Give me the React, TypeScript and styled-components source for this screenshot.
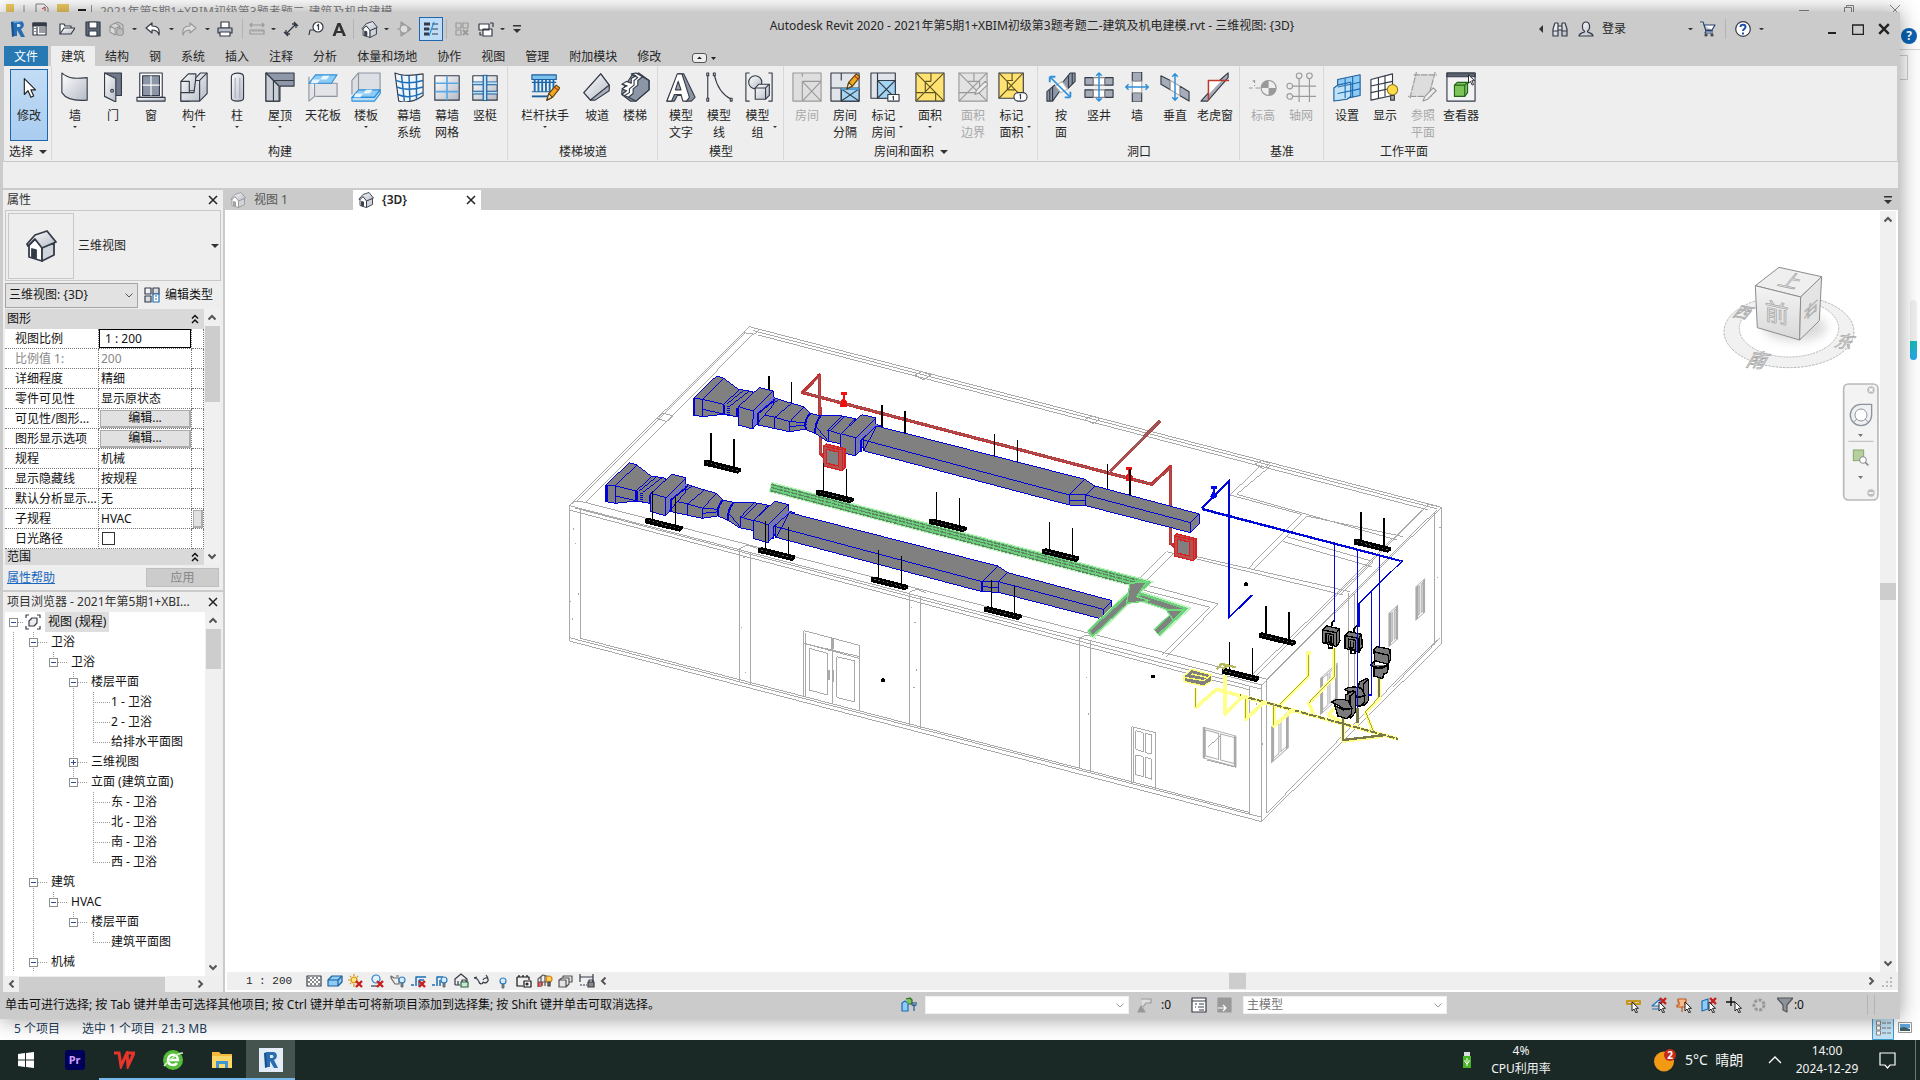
import React from "react";
import styled, { createGlobalStyle } from "styled-components";

const Global = createGlobalStyle`
  * { box-sizing: border-box; }
  html, body { margin: 0; height: 100%; }
  body { font: 12px/16px "Noto Sans", "Noto Sans CJK SC", sans-serif; color: #262626; background: #fff; overflow: hidden; }
  button, input, select { font: inherit; color: inherit; margin: 0; padding: 0; border: 0; background: none; border-radius: 0; }
  svg { display: block; flex: none; }
  ul { list-style: none; margin: 0; padding: 0; }
`;

/* ---------- shell ---------- */
const Desktop = styled.div`
  position: relative; display: flex; flex-direction: column; height: 100vh; min-height: 720px; overflow: hidden;
`;
const Explorer = styled.div`
  position: absolute; inset: 0 0 40px 0; display: flex; flex-direction: column; justify-content: space-between; background: #fff; overflow: hidden;
`;
const ExplorerTop = styled.div`
  display: flex; align-items: flex-start; height: 80px; color: #8c8c8c; padding-left: 6px;
`;
const ExplorerTitle = styled.span`padding: 4px 0 0 8px; flex: 1; white-space: nowrap;`;
const ExplorerBottom = styled.div`
  display: flex; align-items: center; height: 22px; padding: 0 8px 0 14px; gap: 22px; color: #24405e;
`;
const Grow = styled.span`flex: 1;`;
const Gap = styled.span<{ $w: number }>`width: ${p => p.$w}px; flex: none;`;
const Widget = styled.div`
  position: absolute; right: 3px; top: 300px; width: 7px; height: 60px; border-radius: 4px;
  background: linear-gradient(#f1f1f1 0 68%, #19bcb4 68%, #2aa8f0);
`;
const HelpBadge = styled.div`
  position: absolute; right: 3px; top: 28px; width: 16px; height: 16px; border-radius: 50%;
  background: #0b63b5; color: #fff; text-align: center; font-weight: 700;
`;
const SearchEdge = styled.div`
  position: absolute; right: 0; top: 49px; width: 40px; height: 29px; border-top: 1px solid #d8d8d8; padding: 5px 12px 0 0;
  &::after { content: ""; display: block; height: 23px; border: 1px solid #cfcfcf; }
`;
const AppWindow = styled.main`
  position: relative; flex: 1; min-height: 0; margin: 12px 20px 21px 0; display: flex; flex-direction: column;
  background: #cbcbcb; box-shadow: 0 0 20px rgba(0,0,0,.4);
`;

/* ---------- title bar ---------- */
const TitleBar = styled.header`
  display: grid; grid-template-columns: auto 1fr auto; align-items: center; height: 34px; padding: 0 4px 0 8px;
`;
const Tools = styled.div`display: flex; align-items: center;`;
const WindowTools = styled(Tools)`margin-left: 55px;`;
const ToolButton = styled.button<{ $w?: number; $on?: boolean }>`
  display: flex; align-items: center; justify-content: center; width: ${p => p.$w || 24}px; height: 24px;
  background: ${p => (p.$on ? "#bcdcf7" : "none")}; border: ${p => (p.$on ? "1px solid #1f66ad" : "0")};
`;
const Divider = styled.span`width: 1px; height: 20px; background: #b4b4b4; margin: 0 3px;`;
const Title = styled.h1`margin: 0; padding-bottom: 6px; font-size: 12px; line-height: 16px; font-weight: 400; white-space: nowrap; text-align: center;`;
const Login = styled.button`width: 88px; text-align: left; padding-left: 4px;`;

/* ---------- ribbon ---------- */
const TabRow = styled.nav`display: flex; height: 20px; padding-left: 4px; white-space: nowrap;`;
const Tab = styled.button<{ $kind?: string }>`
  height: 20px; padding: 2px 10px 0;
  ${p => p.$kind === "file" && "background:#2679b3; color:#fff; margin-right:3px;"}
  ${p => p.$kind === "on" && "background:#eee;"}
`;
const Ribbon = styled.section`
  display: flex; height: 96px; margin: 0 3px 0 4px; background: #eee; border-bottom: 1px solid #c8c8c8;
`;
const Panel = styled.div`
  display: flex; flex-direction: column; justify-content: space-between; padding: 3px 3px 0 4px; margin: 0 0 1px;
  border-right: 1px solid #d8d8d8; &:last-child { border-right: 0; }
`;
const PanelRow = styled.div`display: flex; height: 72px;`;
const PanelName = styled.div`
  display: flex; align-items: center; justify-content: center; gap: 6px; height: 16px; white-space: nowrap;
`;
const BigButton = styled.button<{ $w: number; $off?: boolean; $on?: boolean }>`
  display: flex; flex-direction: column; align-items: center; width: ${p => p.$w}px; height: 72px; padding-top: 3px;
  line-height: 17px; white-space: nowrap; color: ${p => (p.$off ? "#a8a8a8" : "#262626")};
  ${p => p.$on && "background: linear-gradient(#c3dcf5,#a9cdf0); border: 1px solid #1f66ad; margin-left: 2px; padding-top: 2px;"}
`;
const Label = styled.span`display: flex; align-items: center; margin-top: 5px; text-align: center;`;
const Options = styled.div`height: 28px; margin: 0 2px 0 3px; background: #eee; border-bottom: 2px solid #cbcbcb;`;

/* ---------- workspace ---------- */
const Work = styled.div`flex: 1; min-height: 0; display: flex; gap: 2px; margin: 0 2px 0 3px;`;
const Side = styled.aside`display: flex; flex-direction: column; width: 220px; flex: none; gap: 2px;`;
const Palette = styled.section<{ $grow?: boolean }>`
  display: flex; flex-direction: column; background: #eee; padding: 0 2px; min-height: 0; ${p => p.$grow && "flex: 1;"}
`;
const PaletteHead = styled.div`
  display: flex; align-items: center; justify-content: space-between; height: 20px; padding: 0 1px 0 2px; flex: none; white-space: nowrap; color: #333;
`;
const HeadText = styled.h2`margin: 0; font-size: 12px; line-height: 16px; font-weight: 400;`;
const IconButton = styled.button`display: flex; align-items: center; justify-content: center; width: 14px; height: 16px; flex: none;`;
const TypeBox = styled.button`
  display: flex; align-items: center; gap: 4px; height: 71px; padding: 2px 1px 2px 2px; border: 1px solid #c8c8c8; text-align: left; flex: none;
`;
const Thumb = styled.span`display: flex; align-items: center; justify-content: center; width: 66px; height: 66px; border: 1px solid #c8c8c8;`;
const TypeRow = styled.div`display: flex; align-items: center; gap: 6px; height: 28px; flex: none;`;
const SelectBox = styled.label<{ $w: number; $dim?: boolean }>`
  position: relative; display: flex; align-items: center; width: ${p => p.$w}px; height: ${p => (p.$dim ? 18 : 25)}px;
  background: ${p => (p.$dim ? "#fff" : "#e2e2e2")}; border: 1px solid ${p => (p.$dim ? "#f0f0f0" : "#a5a5a5")};
  color: ${p => (p.$dim ? "#777" : "#1a1a1a")};
  select { appearance: none; width: 100%; height: 100%; padding: 0 20px 0 3px; outline: 0; }
  svg { position: absolute; right: 4px; pointer-events: none; }
`;
const TextButton = styled.button`display: flex; align-items: center; gap: 5px; white-space: nowrap; color: #111;`;
const PropBody = styled.div`display: flex; height: 256px; overflow: hidden; flex: none;`;
const PropTable = styled.table`
  width: 199px; height: 260px; border-collapse: separate; border-spacing: 0; table-layout: fixed; background: #fff; color: #111; align-self: flex-start;
  th, td { height: 20px; padding: 0 0 0 2px; font-weight: 400; text-align: left; line-height: 16px; white-space: nowrap;
    border: 0 dotted #777; border-width: 0 1px 1px 0; }
  tbody th { padding-left: 10px; }
  tr.group th { background: #d9d9d9; border: 0; padding: 0 5px 0 2px; }
  tr.group:last-child th { padding-bottom: 4px; }
  tr.dim th, tr.dim td { color: #888; }
`;
const GroupHead = styled.span`display: flex; align-items: center; justify-content: space-between;`;
const CellInput = styled.input`display: block; width: 92px; height: 19px; margin-left: -2px; padding: 0 5px; border: 1px solid #000; outline: 0; background: #fff;`;
const CellButton = styled.button`
  display: block; width: 91px; height: 18px; margin-left: -1px; background: #e1e1e1; border: 1px solid #adadad; border-width: 1px 2px 2px 1px; line-height: 14px;
`;
const MiniButton = styled(CellButton)`width: 10px;`;
const CellCheck = styled.input`
  display: block; appearance: none; width: 13px; height: 13px; margin: 0 1px; border: 1px solid #333; background: #fff;
`;
const ScrollV = styled.div`
  display: flex; flex-direction: column; align-items: center; width: 16px; flex: none; background: #f0f0f0; padding: 1px 0;
`;
const ScrollH = styled.div`
  display: flex; align-items: center; height: 16px; flex: 1; background: #efefef; min-width: 0;
`;
const ScrollRow = styled.div`display: flex; height: 16px; flex: none; padding-right: 14px;`;
const Knob = styled.span<{ $w: number; $h: number }>`width: ${p => p.$w}px; height: ${p => p.$h}px; background: #cdcdcd; flex: none;`;
const Foot = styled.div`display: flex; align-items: center; justify-content: space-between; height: 25px; padding: 0 2px; flex: none;`;
const HelpLink = styled.a`color: #1667c0; text-decoration: underline;`;
const Apply = styled.button`width: 73px; height: 19px; background: #ccc; border: 1px solid #bfbfbf; color: #868686;`;

/* ---------- browser tree ---------- */
const TreeWrap = styled.div`display: flex; flex: 1; min-height: 0;`;
const Tree = styled.ul`flex: 1; background: #fff; overflow: hidden; color: #111; min-width: 0;`;
const TreeRow = styled.li`display: flex; align-items: center; height: 20px; white-space: nowrap;`;
const Guide = styled.span<{ $line: "full" | "half" | "none"; $w?: number }>`
  display: flex; align-items: center; width: ${p => p.$w || 20}px; height: 20px; padding-left: 4px; flex: none;
  background: repeating-linear-gradient(#999 0 1px, transparent 1px 2px) 8px 0 / 1px ${p => (p.$line === "full" ? "20px" : p.$line === "half" ? "10px" : "0px")} no-repeat;
`;
const Expander = styled.button`display: flex; width: 9px; height: 9px; flex: none; background: #fff;`;
const Dots = styled.span<{ $w: number; $leaf?: boolean }>`
  width: ${p => p.$w}px; height: 1px; margin-left: ${p => (p.$leaf ? 4 : 0)}px; background: repeating-linear-gradient(90deg, #999 0 1px, transparent 1px 2px);
`;
const RootName = styled.span`height: 20px; line-height: 20px; padding: 0 3px; margin-left: 4px; background: #dedede;`;

/* ---------- view area ---------- */
const View = styled.section`flex: 1; min-width: 0; display: flex; flex-direction: column; background: #fff;`;
const ViewTabs = styled.div`display: flex; align-items: center; height: 20px; background: #cbcbcb; flex: none;`;
const ViewTab = styled.button<{ $on?: boolean }>`
  display: flex; align-items: center; gap: 8px; width: 128px; height: 20px; padding: 0 5px; text-align: left;
  background: ${p => (p.$on ? "#fff" : "none")}; font-weight: ${p => (p.$on ? 600 : 400)}; color: ${p => (p.$on ? "#262626" : "#555")};
`;
const Stage = styled.div`flex: 1; min-height: 0; display: flex; padding: 1px 2px 0 0;`;
const Drawing = styled.svg`flex: 1; min-width: 0; height: 100%;`;
const ViewBar = styled.div`display: flex; align-items: center; height: 18px; margin: 0 0 2px 2px; background: #efefef; flex: none;`;
const ScaleText = styled.button`width: 76px; padding-left: 8px; text-align: center; font: 11px/16px "Liberation Mono", monospace; white-space: pre;`;
const ViewIcon = styled.button`display: flex; align-items: center; justify-content: center; width: 21px; height: 18px; flex: none;`;

/* ---------- status ---------- */
const Status = styled.footer`display: flex; align-items: center; height: 27px; padding: 0 22px 2px 5px; color: #111; flex: none; white-space: nowrap;`;
const StatusHint = styled.span`flex: 0 0 896px;`;
const StatusGroup = styled.div<{ $gap?: number }>`display: flex; align-items: center; gap: ${p => p.$gap || 8}px;`;

/* ---------- taskbar ---------- */
const Taskbar = styled.nav`display: flex; align-items: stretch; height: 40px; padding-left: 1px; background: #1a2926; color: #f4f4f4; flex: none; position: relative;`;
const Task = styled.button<{ $run?: boolean; $on?: boolean }>`
  display: flex; align-items: center; justify-content: center; width: 49px; background: ${p => (p.$on ? "#45544f" : "none")};
  border-bottom: 2px solid ${p => (p.$run || p.$on ? "#76b9ed" : "transparent")}; padding-top: 2px;
`;
const Pr = styled.span`width: 20px; height: 20px; border-radius: 3px; background: #00005b; color: #d0a0ff; font: 700 11px/20px "Noto Sans", sans-serif;`;
const Two = styled.div<{ $w: number }>`
  display: flex; flex-direction: column; justify-content: center; width: ${p => p.$w}px; text-align: center; line-height: 18px;
`;
const Weather = styled.button`display: flex; align-items: center; gap: 9px; width: 112px; color: #f4f4f4; font-size: 14px; white-space: pre;`;
const Tray = styled.button<{ $w: number }>`display: flex; align-items: center; justify-content: center; width: ${p => p.$w}px;`;
const Edge = styled.span`width: 5px; margin-left: 5px; border-left: 1px solid #6d7774;`;

/* ---------- small glyphs ---------- */
const D = "#343b47";
const Ico = ({ s = 16, vb, children, off }: { s?: number; vb?: number; children: React.ReactNode; off?: boolean }) => (
  <svg width={s} height={s} viewBox={`0 0 ${vb || s} ${vb || s}`} fill="none" stroke={off ? "#999" : D} strokeWidth="1.2" strokeLinejoin="round" aria-hidden="true">{children}</svg>
);
const Down = ({ s = 6 }: { s?: number }) => (
  <svg width={s} height={s / 2} viewBox="0 0 6 3" aria-hidden="true"><path d="M0 0h6L3 3z" fill="#333" /></svg>
);
const Cross = ({ s = 10, w = 2 }: { s?: number; w?: number }) => (
  <svg width={s} height={s} viewBox="0 0 10 10" aria-hidden="true"><path d="M1 1l8 8M9 1L1 9" stroke="#222" strokeWidth={w} /></svg>
);
const Chevron = ({ r = 0, c = "#555", w = 2, s = 8 }: { r?: number; c?: string; w?: number; s?: number }) => (
  <svg width={s} height={s} viewBox="0 0 8 8" aria-hidden="true"><path transform={`rotate(${r} 4 4)`} d="M0.5 2.5L4 6l3.5-3.5" stroke={c} strokeWidth={w} fill="none" /></svg>
);
const House = ({ s = 16, off }: { s?: number; off?: boolean }) => (
  <Ico s={s} vb={32} off={off}>
    <g strokeWidth="1.8"><path d="M4 15v12l13 4V17L10 9z" fill="#fff" /><path d="M17 17v14l12-6V13z" fill="#cfd3da" />
      <path d="M2 14l8-9 12-4 9 11-14 6-7-9-7 7z" fill="url(#metal)" /><path d="M7 19v8l4 1v-8z" fill={off ? "#aaa" : D} /></g>
  </Ico>
);
const RLogo = ({ s = 18 }: { s?: number }) => (
  <svg width={s} height={s} viewBox="0 0 18 18" aria-hidden="true">
    <path d="M2 2l4-1v15l-3 1z" fill="#17508e" /><path d="M4 1h7c5 0 5 7 1 8l4 8h-4L8 10v6H5z" fill="#2a6cb0" /><path d="M8 4v3h2c2 0 2-3 0-3z" fill="#cfe2f2" />
    <path d="M4 1h7l2 1-8 1z" fill="#6db0e6" />
  </svg>
);
const RedX = ({ x = 8, y = 8 }: { x?: number; y?: number }) => <path d={`M${x} ${y}l6 6M${x + 6} ${y}l-6 6`} stroke="#c81e1e" strokeWidth="2.4" />;
const Arrow = () => <path d="M6 5v9l2-2 2 4 1.500-.7-2-4h3z" fill="#fff" stroke="#222" strokeWidth="1" />;

/* Ribbon drawings, on a 32 unit grid. */
const B = "#2f8fd8";
const pencil = <g><path d="M18 30l2-7 8-9 4 3-8 10z" fill="#f3a91e" stroke="#5b4210" /><path d="M18 30l2-7 4 4z" fill="#f7e3c0" stroke="#5b4210" /><path d="M26 16l4 3.500" stroke="#b33" /></g>;
const R: Record<string, React.ReactNode> = {
  cursor: <path d="M11 7v17l4-4 3 7 3-1.500-3-6.500h5z" fill="#fff" stroke="#222" />,
  wall: <path d="M2 1c7 7 17 6 27 5v24C17 31 7 30 2 22z" fill="url(#metal)" />,
  door: <g><path d="M7 1h18v24h-18z" fill="#707989" /><path d="M7 1l12 6v25L7 26z" fill="url(#metal)" /><circle cx="15" cy="20" r="1.500" /></g>,
  window: <g><path d="M4 1h24v26H4z" fill="#fff" /><path d="M7 4h18v21H7z" fill="#8d96a6" /><path d="M16 4v21M7 14h18" stroke="#fff" /><path d="M1 27h30v4H1z" fill="url(#metal)" /></g>,
  part: <g><path d="M2 10l8-8h8v18h-7v11H2z" fill="url(#metal)" /><path d="M18 6l5-5h7v22l-8 8H2V22h14z" fill="url(#metal)" /><path d="M22 31V9h-4M22 9l8-8M2 10h9v10" /></g>,
  column: <g><path d="M10 5c0-5 13-5 13 0v23c0 4-13 4-13 0z" fill="url(#metal)" /><path d="M14 6v22M19 6v22" stroke="#aab" /></g>,
  roof: <g><path d="M1 1h30v14H16v16H1z" fill="#8f98a8" /><path d="M1 1l14 14v16H1z" fill="#c9ced6" /><path d="M1 1l8 8h22M9 9v22M1 1l14 14" /></g>,
  ceiling: <g><path d="M1 5v26l6-5V12h24v14H8" fill="#e2e4e8" stroke="#8d949f" /><path d="M1 12l7-9h23l-6 9z" fill="#8ecbf5" stroke={B} /><path d="M5 8h8l-3 4H3zM16 4h7l-3 4h-7z" fill="#e8f5ff" stroke="none" /></g>,
  floor: <g><path d="M1 24V9l7-8h23v22" fill="#dcdfe4" stroke="#8d949f" /><path d="M8 1v19" stroke="#8d949f" /><path d="M1 27l7-8h23l-6 8z" fill="#8ecbf5" stroke={B} /><path d="M1 27v4h24l6-8v-4l-6 8z" fill="#b9dff8" stroke={B} /><path d="M5 23h8l-3 4H3zM16 19h7l-3 4h-7z" fill="#e8f5ff" stroke="none" /></g>,
  curtain: <g><path d="M1 1c9 4 19 3 30 1v23c-9 7-20 8-26 6z" fill="#eef6fc" /><path d="M2 9c9 4 19 3 29 0M3 16c9 4 18 3 28 0M4 24c9 4 17 3 27-2M8 3l3 28M16 4l1 27M24 3v27" stroke="#1c6db5" strokeWidth="1.600" /></g>,
  grid: <g><path d="M3 4h26v26H3z" fill="url(#metal)" /><path d="M16 4v26M3 12h26M3 21h26" stroke="#5aa9e6" strokeWidth="1.800" /></g>,
  mullion: <g><path d="M3 4h26v26H3z" fill="url(#metal)" /><path d="M3 12h26M3 22h26" stroke="#1d5c96" strokeWidth="4" /><path d="M3 12h26M3 22h26" stroke="#b9e0fa" strokeWidth="2" /><path d="M16 3v28" stroke="#1d5c96" strokeWidth="5" /><path d="M16 4v26" stroke="#b9e0fa" strokeWidth="2.500" /></g>,
  rail: <g><path d="M2 3h26v5H2zM2 11h26M2 21h26" fill="#7cc0ee" stroke="#1c5f9d" /><path d="M5 8v13M9 8v13M13 8v13M17 8v13M21 8v13M25 8v13" stroke="#1c6db5" strokeWidth="2" /><path d="M2 26h18" stroke="#1c5f9d" strokeWidth="2" />{pencil}</g>,
  ramp: <g><path d="M2 22L20 2l9 12v3L9 30z" fill="#fff" /><path d="M2 22L20 2l9 12L9 30z" fill="url(#metal)" /><path d="M9 30L29 14v6L14 30z" fill="#a9b0bc" /></g>,
  stair: <g><path d="M13 3L20 1 31 9V19L17 31H11L2 24V20z" fill="#8d96a6" /><path d="M2 13L7 10 12 12V7L17 4 12 2 17 1 24 5 19 9V14L14 18V23L9 27 2 24 7 20 2 18 7 15z" fill="#fff" /><path d="M13 3l6 3-4 3v5l-5 4v4l-5 3M2 13l6 2" /><path d="M24 5l7 4v10L17 31 9 27" /></g>,
  letterA: <g><path d="M13 2h6l12 25-4 4h-6l-2-6h-7l-3 6H1z" fill="#8d95a3" /><path d="M12 2h5l8 25-3 4h-4l-2-7H9l-3 7H1z" fill="#fff" /><path d="M13 10l-3 9h6z" fill="#9aa2b0" /></g>,
  mline: <g><path d="M4 3v26M11 3c3 14 10 22 18 26" /><path d="M3 1h2v3H3zM3 28h2v3H3zM10 1h2v3h-2zM28 28h2v3h-2z" fill="#fff" /></g>,
  group: <g><path d="M6 1H2v30h4M26 1h4v30h-4" /><circle cx="12" cy="11" r="7" fill="url(#metal)" /><path d="M12 17l4-4h11v12l-4 4H12z" fill="url(#metal)" /><path d="M12 17h11v12M23 17l4-4" /></g>,
  room: <g><path d="M1 1h30v30H1z" fill="#dedede" /><path d="M11 10v20M11 10h20M11 10l20 21M31 10L11 31M11 1v4" /></g>,
  roomSep: <g><path d="M1 1h30v30H1z" fill="#e1e5ea" /><path d="M12 18h19v13H12z" fill="#a3d4f1" /><path d="M12 1v8M12 17v14M12 31l19-13M12 18l19 13M1 17h30" /><path d="M12 18h19" stroke="#4aa3e0" strokeWidth="2" /><g transform="translate(0,-12)">{pencil}</g></g>,
  roomTag: <g><path d="M1 1h26v27H1z" fill="#e1e5ea" /><path d="M8 9h19v19H8z" fill="#a3d4f1" /><path d="M8 1v27M8 9h19M8 9l19 19M27 9L8 28" /><path d="M19 24h12v7H19z" fill="#fff" /><path d="M24 27l1-1v4" /></g>,
  area: <g><path d="M1 1h30v30H1z" fill="#ffe270" /><path d="M1 1l30 30M31 1L1 31M11 10v12h11M11 10h6M17 1v9M1 22h8M22 22v9" stroke="#5f5325" /></g>,
  areaOff: <g><path d="M1 1h30v30H1z" fill="#e2e2e2" /><path d="M1 1l30 30M31 1L1 31M11 10h12v12H1M17 1v9" /><path d="M18 24l2-5 9-9 3 3-9 9z" fill="#eee" /></g>,
  areaTag: <g><path d="M1 1h26v27H1z" fill="#ffe270" /><path d="M1 1l26 27M27 1L1 28M10 9v10h9M15 1v8M10 9h6" stroke="#5f5325" /><rect x="17" y="22" width="14" height="9" rx="4.500" fill="#fff" /><path d="M23 25l1-1v5" /></g>,
  byFace: <g><path d="M1 31V21l8-7 6 6-8 11zM17 12L26 1h5v9l-8 8z" fill="#8d96a6" /><path d="M4 19v12M7 16v15M24 4v13M28 1v12" /><path d="M10 15l7-5 6 8-7 4z" fill="#fff" stroke="#bbb" /><path d="M5 6l20 20" stroke={B} strokeWidth="1.600" /><path d="M4 5h6M4 5v6M26 27h-6M26 27v-6" stroke={B} strokeWidth="2" /></g>,
  shaft: <g><path d="M1 6h9v8H1zM22 6h9v8h-9zM1 19h9v8H1zM22 19h9v8h-9z" fill="#a6adb9" /><path d="M10 6h12v8H10zM10 19h12v8H10z" fill="#fff" stroke="#888" /><path d="M16 1v30M13 4l3-3 3 3M13 28l3 3 3-3" stroke={B} strokeWidth="1.600" /></g>,
  openWall: <g><path d="M11 0h10v10H11zM11 22h10v10H11z" fill="#a6adb9" /><path d="M11 10h10v12H11z" fill="#fff" stroke="#aaa" /><path d="M4 16h24M7 13l-3 3 3 3M25 13l3 3-3 3" stroke={B} strokeWidth="1.600" /></g>,
  vert: <g><path d="M1 4l10 5v10L1 13zM21 15l10 6v10l-10-6z" fill="#a6adb9" /><path d="M11 9l10 6v10l-10-6z" fill="#fff" stroke="#aaa" /><path d="M16 2v28M13 5l3-3 3 3M13 27l3 3 3-3" stroke={B} strokeWidth="1.600" /></g>,
  dormer: <g><path d="M1 31L22 8 30 1v5L8 31z" fill="#a6adb9" /><path d="M9 9l14 0-14 15z" fill="#fff" stroke="none" /><path d="M9 30V9h22" stroke="#c0392b" strokeWidth="1.600" /></g>,
  level: <g><path d="M1 17h4M8 17h22M5 10l2-1v6" strokeDasharray="5 2" /><circle cx="22" cy="17" r="8" fill="#eee" /><path d="M22 9v8h-8a8 8 0 0 1 8-8zM22 25v-8h8a8 8 0 0 1-8 8z" fill="#999" stroke="none" /></g>,
  axes: <g><circle cx="4" cy="15" r="3" /><circle cx="4" cy="26" r="3" /><circle cx="14" cy="4" r="3" /><circle cx="25" cy="4" r="3" /><path d="M7 15h25M7 26h25M14 7v25M25 7v25" /></g>,
  plane: <g><path d="M6 8l24-5v22L6 30z" fill="#8ecbf5" stroke="#1c5f9d" /><path d="M2 17l4-3 14-3v15l-4 3-14 2z" fill="#bfe2f9" stroke="#1c5f9d" /><path d="M6 16l24-5M6 23l24-5M14 7v21M22 5v22" stroke="#1c6db5" /></g>,
  show: <g><path d="M1 8l23-6v23L1 30z" fill="#fff" /><path d="M1 15l23-5M1 22l23-5M9 6v22M16 4v22" /><circle cx="24" cy="19" r="5.500" fill="#ffdc4a" stroke="#9a7a14" /><path d="M22 25h4v5h-4z" fill="#aaa" /></g>,
  refPlane: <g><path d="M8 3h20l-5 22H3z" fill="#ddd" stroke="none" /><path d="M6 3h25M29 0l-7 26M25 26H0M2 28L9 0" strokeDasharray="7 1" /><path d="M16 31l2-5 9-9 3 3-9 9z" fill="#eee" /></g>,
  viewer: <g><path d="M1 1h30v30H1z" fill="#f3f3f6" /><path d="M1 1h30v4H1z" fill="#5b6270" /><path d="M9 14l3-3h11v11l-3 4H9z" fill="#7cc35c" stroke="#24641a" /><path d="M9 14h11v12M20 14l3-3" stroke="#24641a" /><g transform="translate(18 -2)"><Arrow /></g></g>,
};

type Btn = { i: string; t: string; u?: string; w?: number; off?: boolean; dd?: boolean };
const panels: { name: string; dd?: boolean; b: Btn[] }[] = [
  { name: "构建", b: [
    { i: "wall", t: "墙", dd: true }, { i: "door", t: "门" }, { i: "window", t: "窗" }, { i: "part", t: "构件", w: 48, dd: true },
    { i: "column", t: "柱", dd: true }, { i: "roof", t: "屋顶", w: 48, dd: true }, { i: "ceiling", t: "天花板" }, { i: "floor", t: "楼板", w: 48, dd: true },
    { i: "curtain", t: "幕墙", u: "系统" }, { i: "grid", t: "幕墙", u: "网格" }, { i: "mullion", t: "竖梃" }] },
  { name: "楼梯坡道", b: [{ i: "rail", t: "栏杆扶手", w: 66, dd: true }, { i: "ramp", t: "坡道" }, { i: "stair", t: "楼梯" }] },
  { name: "模型", b: [{ i: "letterA", t: "模型", u: "文字" }, { i: "mline", t: "模型", u: "线" }, { i: "group", t: "模型", u: "组", w: 42, dd: true }] },
  { name: "房间和面积", dd: true, b: [
    { i: "room", t: "房间", off: true }, { i: "roomSep", t: "房间", u: "分隔" }, { i: "roomTag", t: "标记", u: "房间", w: 42, dd: true },
    { i: "area", t: "面积", w: 48, dd: true }, { i: "areaOff", t: "面积", u: "边界", off: true }, { i: "areaTag", t: "标记", u: "面积", w: 42, dd: true }] },
  { name: "洞口", b: [{ i: "byFace", t: "按", u: "面" }, { i: "shaft", t: "竖井" }, { i: "openWall", t: "墙" }, { i: "vert", t: "垂直" }, { i: "dormer", t: "老虎窗", w: 42 }] },
  { name: "基准", b: [{ i: "level", t: "标高", off: true }, { i: "axes", t: "轴网", off: true }] },
  { name: "工作平面", b: [{ i: "plane", t: "设置" }, { i: "show", t: "显示" }, { i: "refPlane", t: "参照", u: "平面", off: true }, { i: "viewer", t: "查看器" }] },
];
const Center = styled.span`display: block; text-align: center;`;
const SideMark = styled.span`display: block; width: 0; margin-top: 6px; padding-left: 3px;`;
const UnderMark = styled.span`display: block; margin-top: 2px;`;
const RibbonButton = ({ b }: { b: Btn }) => (
  <BigButton $w={b.w || 38} $off={b.off} disabled={b.off}>
    <Ico s={30} vb={32} off={b.off}>{R[b.i]}</Ico>
    <Label><Center>{b.t}{b.u && <><br />{b.u}</>}</Center>{b.dd && b.u && <SideMark><Down s={4} /></SideMark>}</Label>
    {b.dd && !b.u && <UnderMark><Down s={4} /></UnderMark>}
  </BigButton>
);

const tabs = ["结构", "钢", "系统", "插入", "注释", "分析", "体量和场地", "协作", "视图", "管理", "附加模块", "修改"];

const rows: { d: number; g: string; t: string; k?: "-" | "+"; last?: boolean }[] = [
  { d: 1, g: "f", t: "卫浴", k: "-" }, { d: 2, g: "ff", t: "卫浴", k: "-", last: true }, { d: 3, g: "ffn", t: "楼层平面", k: "-" },
  { d: 4, g: "ffnf", t: "1 - 卫浴" }, { d: 4, g: "ffnf", t: "2 - 卫浴" }, { d: 4, g: "ffnf", t: "给排水平面图", last: true },
  { d: 3, g: "ffn", t: "三维视图", k: "+" }, { d: 3, g: "ffn", t: "立面 (建筑立面)", k: "-", last: true },
  { d: 4, g: "ffnn", t: "东 - 卫浴" }, { d: 4, g: "ffnn", t: "北 - 卫浴" }, { d: 4, g: "ffnn", t: "南 - 卫浴" }, { d: 4, g: "ffnn", t: "西 - 卫浴", last: true },
  { d: 1, g: "f", t: "建筑", k: "-" }, { d: 2, g: "ff", t: "HVAC", k: "-", last: true }, { d: 3, g: "ffn", t: "楼层平面", k: "-", last: true },
  { d: 4, g: "ffnn", t: "建筑平面图", last: true }, { d: 1, g: "f", t: "机械", k: "-" },
];
const Box = ({ k }: { k: string }) => (
  <Expander aria-label={k === "-" ? "折叠" : "展开"}>
    <svg width="9" height="9" viewBox="0 0 9 9"><rect x=".5" y=".5" width="8" height="8" fill="#fff" stroke="#8f8f8f" /><path d={k === "-" ? "M2 4.500h5" : "M2 4.500h5M4.500 2v5"} stroke="#2b4c9b" /></svg>
  </Expander>
);

const props: [string, React.ReactNode, React.ReactNode?, boolean?][] = [
  ["视图比例", <CellInput defaultValue="1 : 200" aria-label="视图比例" />], ["比例值 1:", "200", null, true], ["详细程度", "精细"], ["零件可见性", "显示原状态"],
  ["可见性/图形...", <CellButton>编辑...</CellButton>], ["图形显示选项", <CellButton>编辑...</CellButton>],
  ["规程", "机械"], ["显示隐藏线", "按规程"], ["默认分析显示...", "无"], ["子规程", "HVAC", <MiniButton aria-label="浏览" />],
  ["日光路径", <CellCheck type="checkbox" aria-label="日光路径" />],
];
const Fold = () => <svg width="8" height="10" viewBox="0 0 8 10" aria-hidden="true"><path d="M1 4.500L4 1.500l3 3M1 9l3-3 3 3" stroke="#111" strokeWidth="1.500" fill="none" /></svg>;

/* ---------- 3D model ---------- */
const Fixture = ({ x, y }: { x: number; y: number }) => (
  <g transform={`translate(${x} ${y})`} stroke="#000">
    <path d="M18-88V4M87-70V20" strokeWidth="4" />
    <path d="M-4-6L8-8 108 17 108 26 98 33-4 8z" fill="#000" stroke="none" />
    <path d="M6 0L98 24" stroke="#666" strokeWidth="3" strokeDasharray="4 9" />
  </g>
);
const Flange = () => (
  <g>
    <path d="M640 303L700 262 718 268 655 312 655 345 640 340z" />
    <path d="M595 290L658 233 700 243 640 303z" /><path d="M640 303L700 243 700 285 638 357z" />
    <path d="M595 290L640 303 638 357 595 345z" />
    <path d="M655 310L706 268M655 308V345" strokeWidth="5" /><path d="M646 345V306L702 262" stroke="#6f6fe0" strokeWidth="5" fill="none" />
  </g>
);
const Duct = () => (
  <g fill="#808080" stroke="#0000d8" strokeWidth="3">
    <path d="M530 198L552 205 595 238 640 245 620 300 590 320 550 313 488 320 460 315 460 265z" />
    <path d="M460 265L488 268 552 205M488 268V320M488 268L550 283 600 238M488 298L550 312M550 283V313M560 283L612 240M570 288L628 243M590 296V320" fill="none" />
    <path d="M463 265V316M552 284V314M592 294V322" strokeWidth="6" /><path d="M566 288V318" strokeWidth="9" strokeDasharray="3 3" />
    <path d="M705 265L790 290 810 310 845 318 905 318 948 326 905 402 860 393 825 370 795 358 748 365 655 345 655 308z" />
    <path d="M655 310L705 322 750 335 800 338M705 322L755 280M705 322V357M750 335L792 290M750 335V365M750 350L800 345M828 350L862 390M865 360L905 318M872 362L915 319M862 360L903 373V402M865 360V395M903 373L946 326" fill="none" />
    <path d="M812 310Q790 330 798 360M842 318Q824 340 826 372" strokeWidth="6" fill="none" />
    <Flange />
    <g transform="translate(308 81)"><Flange /></g>
    <path d="M1010 348L1635 508 1588 555 1588 585 970 422 970 385z" />
    <path d="M970 390L1588 555M970 385V424L1010 348" fill="none" />
    <path d="M1665 528L1978 612 1978 640 1952 668 1637 587 1637 555z" />
    <path d="M1637 555L1952 638V668M1952 638L1978 612" fill="none" />
    <path d="M1588 555L1635 508 1665 528 1637 555V587L1588 585z" /><path d="M1588 555H1637M1588 570L1637 573M1590 553V585M1637 555V587" />
  </g>
);
const FireBox = ({ x, y }: { x: number; y: number }) => (
  <g transform={`translate(${x} ${y})`} stroke="#d82020" strokeWidth="4"><path d="M0 8L8 0 65 14 65 72 57 80 0 66z" fill="#b85050" /><path d="M10 16L46 24V66L10 58z" fill="#808080" /><path d="M0 6L57 18V78" fill="none" /></g>
);
const Urinal = ({ x, y }: { x: number; y: number }) => (
  <g transform={`translate(${x} ${y})`} stroke="#000" strokeWidth="4" fill="#7a7a7a"><path d="M0 12L12 0 50 8 52 45 42 62 0 50z" /><path d="M0 12L42 20V62M42 20L50 8" fill="none" /><path d="M10 22L32 26V55L10 48z" /><path d="M17 28V48H25V30M18 56V66H30V60" fill="none" /><path d="M28 0V-10L36-18" strokeWidth="6" /></g>
);
const Toilet = ({ x, y, f }: { x: number; y: number; f?: boolean }) => (
  <g transform={`translate(${x} ${y})${f ? " scale(-1 1)" : ""}`} stroke="#000" strokeWidth="4" fill="#7a7a7a">
    <path d="M0 0L10-8 48 0 50 32 42 45 2 34z" /><path d="M2 8L44 18V44" fill="none" />
    <path d="M2 34L-10 48Q20 70 42 45V60Q40 75 30 74L26 88 0 80V60z" /><path d="M-10 48Q10 60 40 48" />
  </g>
);
/* A closet seen from the side: tank on the right, bowl to the left. */
const SideToilet = ({ x, y }: { x: number; y: number }) => (
  <g transform={`translate(${x} ${y})`} stroke="#000" strokeWidth="4" fill="#7a7a7a">
    <path d="M44 12L66 0 72 4V66L58 82 40 76V40z" /><path d="M72 4L56 16V80" fill="none" />
    <path d="M0 34Q20 20 50 30L62 52 40 56 20 44z" /><path d="M10 44L20 76 46 84 60 70V54L36 58z" />
  </g>
);
const Win = ({ x, y, w, h, k }: { x: number; y: number; w: number; h: number; k: number }) => (
  <g transform={`translate(${x} ${y}) skewY(${k})`}><path d={`M0 0H${w}V${h}H0zM6 6H${w / 2 - 3}V${h - 8}H6zM${w / 2 + 3} 6H${w - 5}V${h - 8}H${w / 2 + 3}z`} /><path d={`M3 2V${h}M${w - 3} 2V${h}`} strokeWidth="6" /></g>
);
const backRods = [[687, 198, 240], [755, 216, 280], [1026, 285, 350], [1095, 303, 368], [1364, 372, 438], [1433, 391, 457], [1703, 462, 536], [1771, 478, 556]];
const fixA = [[495, 458], [833, 547], [1172, 634], [320, 632], [658, 720], [997, 808], [1337, 897], [1510, 723], [2160, 975], [2050, 1083], [2445, 695]];
const yellow = "M587 925V983L650 928 1195 1077M676 885V1002L730 948M738 955V1018L790 968M822 968V1038L875 993M925 820V890L840 975M1003 805V890L927 970 940 1000M1030 1010V1083L1150 1068M1073 1000V1035M1138 885V955L1097 998 1120 1055M985 1003L1010 980M985 1003L1030 1030";
const Model = () => (
  <g transform="translate(540 310) scale(.3333)" fill="none" shapeRendering="crispEdges">
    <g stroke="#a9a9a9" strokeWidth="3">
      <path d="M628 50L2705 592M640 62L2690 596M655 75L2665 600M612 68L640 72 M628 50L88 587M618 66L108 575M640 72L135 580M628 50L612 68M660 58L640 75" />
      <path d="M350 325L370 310 400 318 380 335zM1125 195L1145 185 1172 195 1150 210zM1635 328L1655 318 1680 326 1660 342zM2145 462L2165 452 2190 460 2170 477z" />
      <path d="M88 587L105 573 135 577M88 587L2165 1125M135 577L2180 1108M105 594L2165 1138M88 600L2130 1140" />
      <path d="M600 715L620 705 650 715M1108 847L1130 838 1158 848M1618 985L1640 975 1668 985" />
      <path d="M88 587V990M122 600V988M600 715V1113M632 725V1122M1108 850V1247M1142 860V1255M1618 985V1378M1652 993V1390M2130 1130V1515M2165 1125V1535M2180 1108V1510" />
      <path d="M88 983L2165 1522M88 993L2165 1535M122 985L2130 1508" />
      <path d="M2705 592V1000M2685 605V1005M2705 592L2165 1125M2690 600L2180 1108M2665 585L2140 1105M2650 598L2130 1100M2705 592L2660 582M2705 1000L2165 1535M2690 990L2180 1510M2700 985L2560 1130" />
      <path d="M2165 465L2070 555 2285 613 2125 775M2190 470L2090 553 2570 690M2300 618L2140 780M2300 618L2590 680M2240 680L2500 755M2230 695L2495 770M2500 755L2400 855" />
      <path d="M1880 725L2410 855M1905 725L2430 845M1905 725L1805 825M1880 725L1800 805M1800 820L2035 882 1880 1040M1800 838L2010 892 1865 1035M2425 850V1200M2445 850V1190" />
      <path d="M792 1160V962L958 1006V1200M798 968V1160M798 1002L958 1045M808 1015L862 1030V1155L808 1140zM890 1040L944 1053V1176L890 1162zM877 985V1178M792 1000L958 1040" />
      <path d="M878 985V1018M866 1080V1110M880 1080V1115" strokeWidth="7" />
      <path d="M1775 1420V1250L1847 1268V1435M1782 1255V1418M1788 1262L1810 1268V1325L1788 1318zM1816 1270L1835 1275V1332L1816 1328zM1788 1335L1810 1340V1400L1788 1394zM1816 1342L1835 1348V1408L1816 1402z" />
      <Win x={1990} y={1252} w={98} h={92} k={15} /><path d="M2005 1310L2040 1280M2000 1350L2088 1372" />
      <Win x={2195} y={1250} w={50} h={108} k={-42} /><Win x={2342} y={1105} w={50} h={108} k={-42} />
      <Win x={2547} y={910} w={26} h={100} k={-42} /><Win x={2628} y={830} w={26} h={100} k={-42} />
      <path d="M100 655v4M106 698v4M92 872v4M115 850v4M98 925v4M612 740v4M604 950v4M617 1085v4M1115 890v4M1125 935v4M1130 1078v4M1122 1130v4M1640 1100v4M1645 1210v4M2150 1180v4M2168 1300v4M2700 650v4M2692 800v4" strokeWidth="4" />
    </g>

    <g strokeLinejoin="round">
      <path d="M852 440L842 430 838 195 788 248 1835 523 1892 470V700L1905 710M1710 485L1862 332" stroke="#c83030" strokeWidth="10" />
      <path d="M842 430L838 200 792 248 1835 523 1892 474V700" stroke="#8a6464" strokeWidth="3" /><path d="M1710 485L1862 332" stroke="#8f6060" strokeWidth="6" />
      <g fill="#f01010"><path d="M902 246H920V256H915V266L920 274 922 292H900L903 274 908 266V256H902z" /><path d="M1759 470H1777V480H1771V490L1778 498 1780 512H1757L1758 498 1765 490V480H1759z" /></g>
    </g>
    <path d={backRods.map(([x, a, b]) => `M${x} ${a}V${b}`).join("")} stroke="#000" strokeWidth="5" />
    <Duct />
    <FireBox x={850} y={402} /><FireBox x={1903} y={672} />
    <g transform="translate(-262 260)"><Duct /></g>

    <g strokeLinejoin="miter">
      <path d="M690 531L1810 822 1650 975M1790 855L1925 900 1850 970" stroke="#c0f3c0" strokeWidth="32" />
      <path d="M692 532L1810 822 1650 972M1795 858L1922 900 1850 968" stroke="#6ccf7b" strokeWidth="25" />
      <path d="M692 532L1790 818M692 523L1790 810M692 542L1790 828" stroke="#5d8463" strokeWidth="4" strokeDasharray="18 3" />
      <path d="M1800 835L1655 968M1800 862L1918 900 1850 966" stroke="#7f837f" strokeWidth="14" />
      <path d="M1770 820L1820 815 1790 860 1830 872 1760 880zM1880 900L1930 900 1900 930z" fill="#7f837f" stroke="#6fdc7c" strokeWidth="4" />
    </g>

    {fixA.map(([x, y]) => <Fixture key={`${x}-${y}`} x={x} y={y} />)}

    <g transform="translate(1380 210)">
      <path d={yellow} stroke="#ffff8c" strokeWidth="11" strokeLinejoin="round" />
      <path d="M587 925V980M738 955V1015M822 968V1035M925 820V888L840 972M1003 805V890L927 968M1138 950L1097 996 1120 1053" stroke="#a3a355" strokeWidth="3" />
      <path d="M720 946L1195 1077" stroke="#77774a" strokeWidth="6" strokeDasharray="22 5" />
      <path d="M722 945h20v12h-20zM782 962h18v12h-18zM866 988h18v12h-18zM918 812h14v12h-14z" fill="#ffff8c" />
      <path d="M552 888L575 868 635 885V903L612 918 552 905z" fill="#808080" stroke="#ffff70" strokeWidth="4" /><path d="M556 893L612 902 632 886M575 882L620 892" stroke="#ffff70" strokeWidth="4" />
      <path d="M650 868L665 852 708 862M668 868L680 858" stroke="#b8b85a" strokeWidth="7" />
      <path d="M1030 1015V1080L1150 1066M1073 985V1030M1138 885V950" stroke="#77774a" strokeWidth="7" />
      <Urinal x={968} y={738} /><Urinal x={1035} y={755} />
      <Toilet x={1122} y={808} />
      <SideToilet x={1034} y={895} /><SideToilet x={994} y={932} />
      <g stroke="#0008d8">
        <path d="M605 385L1207 543 1077 670V740M605 385L687 303 688 712 757 645M1003 490V725M1138 525V800" strokeWidth="4" />
        <path d="M605 385L687 303M687 303L688 712L757 645M1073 510V985M1115 635V945H1105M605 388L1200 543" strokeWidth="5" />
        <path d="M634 318H650V326H644V336L653 348 640 358 630 350 638 336V326H634z" fill="#0008f0" stroke="none" />
      </g>
      <circle cx="738" cy="613" r="6" fill="#000" /><circle cx="459" cy="890" r="6" fill="#000" />
    </g>
    <circle cx="1029" cy="1111" r="6" fill="#000" />
  </g>
);
const Cube = () => (
  <g transform="translate(1680 240) scale(.3333)" fill="none">
    <ellipse cx="327" cy="275" rx="195" ry="108" fill="#f1f1f1" stroke="#b5b5b5" strokeWidth="3" strokeDasharray="8 3" />
    <ellipse cx="327" cy="265" rx="149" ry="86" fill="#fff" stroke="#b5b5b5" strokeWidth="3" strokeDasharray="6 3" />
    <ellipse cx="345" cy="262" rx="95" ry="42" fill="#c4c4c4" opacity=".6" filter="url(#soft)" />
    <g stroke="#8c8c8c" strokeWidth="3" strokeLinejoin="round"><path d="M226 137L297 82 425 110 362 171z" fill="#efefef" /><path d="M226 137L362 171 359 300 232 263z" fill="url(#cubeA)" /><path d="M362 171L425 110 418 242 359 300z" fill="#e4e4e4" /></g>
    <g fill="#e2e2e2" stroke="#a2a2a2" strokeWidth="2" fontFamily="Noto Sans CJK SC, sans-serif">
      <text transform="translate(254 238) skewY(12)" fontSize="72">前</text>
      <text transform="translate(372 242) skewY(-42)" fontSize="42">右</text>
      <text transform="translate(290 134) skewY(12) skewX(-35)" fontSize="56">上</text>
      <text transform="translate(156 228) rotate(10) skewX(-30)" fontSize="46">西</text>
      <text transform="translate(194 378) rotate(6) skewX(-25)" fontSize="58">南</text>
      <text transform="translate(460 320) rotate(6) skewX(-25)" fontSize="52">东</text>
    </g>
    <g stroke="#b9b9b9" strokeWidth="5"><rect x="491" y="432" width="103" height="348" rx="14" fill="#f3f3f3" /><circle cx="573" cy="450" r="11" fill="#bdbdbd" stroke="none" /><circle cx="573" cy="759" r="11" fill="#bdbdbd" stroke="none" />
      <path d="M568 445l10 10M578 445l-10 10M566 759h14" stroke="#fff" strokeWidth="4" /><path d="M505 604H581" strokeWidth="3" /></g>
    <path d="M543 493H575V525A32 32 0 1 1 543 493z" stroke="#8d939d" strokeWidth="4" fill="#eef0f2" /><circle cx="543" cy="525" r="18" stroke="#8d939d" strokeWidth="3" fill="#fff" /><path d="M530 538l-10 9M556 538l10 9" stroke="#8d939d" strokeWidth="3" />
    <path d="M534 582h15l-7 9zM534 708h15l-7 9z" fill="#777" /><rect x="520" y="630" width="31" height="32" fill="#b5cf9f" stroke="#87a86e" strokeWidth="3" /><circle cx="549" cy="660" r="10" fill="#fff" stroke="#888" strokeWidth="3" /><path d="M556 667l9 9" stroke="#888" strokeWidth="5" />
  </g>
);

const bulb = <g><circle cx="12" cy="7" r="3" fill="#d6ecfb" stroke="#2f7fc4" /><path d="M11 10h2v4h-2z" fill="#7a8595" stroke="#566" strokeWidth=".8" /></g>;
const viewIcons: [string, React.ReactNode][] = [
  ["详细程度", <g><path d="M1 3h14v10H1z" fill="#fff" /><path d="M2 5h12M2 9h12" strokeWidth="2" strokeDasharray="2 2" stroke="#888" /><path d="M4 7h10M4 11h10" strokeWidth="2" strokeDasharray="2 2" stroke="#888" /></g>],
  ["视觉样式", <g stroke="#1c5f9d"><path d="M1 7l4-4h10v6l-4 4H1z" fill="#8ecbf5" /><path d="M1 7h10v6M11 7l4-4" /></g>],
  ["日光路径", <g><circle cx="6" cy="7" r="3" fill="#ffe37a" stroke="#d29212" /><path d="M6 1v2M6 11v3M0 7h2M2 3l1 1M10 3L9 4M2 11l1-1" stroke="#d29212" /><RedX /></g>],
  ["阴影", <g><circle cx="7" cy="6" r="4" fill="#e3f1fb" stroke="#2f7fc4" /><path d="M2 13h6" /><RedX /></g>],
  ["渲染", <g><path d="M1 3l3 2h5v6H5L1 5zM6 3h3" fill="#eee" stroke="#666" />{bulb}</g>],
  ["裁剪", <g><path d="M0 12h3M5 13V4h10M8 7h5M8 13V7" stroke="#1c6db5" strokeWidth="1.500" /><RedX /></g>],
  ["裁剪区域", <g><path d="M0 12h3M5 13V4h6M8 13V7" stroke="#1c6db5" strokeWidth="1.500" />{bulb}</g>],
  ["锁定", <g><path d="M2 12V6l6-5 6 5v3M2 12h5M5 12V8" fill="#eee" /><path d="M8 9h7v5H8z" fill="#cfe6d2" stroke="#264" /><path d="M9 9V7h4v2" /></g>],
  ["隐藏隔离", <g><path d="M0 5c2 0 4 1 5 4 1 3 4 2 4 0 2 2 6 0 5-3-1-2-4-1-5 1" /><path d="M0 5l3-1M14 5l-2-3" /></g>],
  ["显示隐藏", <g transform="translate(-4 1)">{bulb}</g>],
  ["临时属性", <g stroke="#111"><path d="M1 4h12v3M1 4v9h6M3 4V2M7 4V2M11 4V2" /><rect x="8" y="8" width="7" height="6" fill="#fff" /><circle cx="11" cy="11" r="1" /></g>],
  ["分析模型", <g><path d="M1 14V6l5-4 7 2v6M1 9h9M4 14V4M8 13V3" stroke="#555" /><path d="M2 14V9M5 13V9" stroke="#c22" strokeWidth="1.500" /><circle cx="12" cy="6" r="3" fill="#ffcf5a" stroke="#d28212" /><path d="M11 9h2v4h-2z" fill="#999" /></g>],
  ["高亮位移", <g><path d="M1 7l3-2h7v6l-3 3H1zM1 7h7v7M5 5V3h9v6h-3" fill="#e4e4e4" stroke="#555" /></g>],
  ["约束", <g><path d="M1 1v8M14 1v8M1 4h13" /><path d="M1 12h7" strokeDasharray="2 1" /><path d="M9 9h6v5H9z" fill="#888" /><path d="M10 9V7h4v2" /></g>],
];

const Qat = () => (
  <Tools>
    <ToolButton $w={19} aria-label="Revit"><RLogo /></ToolButton>
    <ToolButton $w={26} aria-label="属性"><Ico><path d="M1 2h13v12H1z" fill="#fff" /><path d="M1 2h13v3H1z" fill={D} /><path d="M5 6v8M7 7h6M7 9h6M7 11h6M3 7v1M3 10v1" /></Ico></ToolButton>
    <ToolButton $w={28} aria-label="打开"><Ico><path d="M1 13V3h4l1 2h6v2" fill="#fff" /><path d="M1 13l4-6h11l-4 6z" fill="url(#metal)" /></Ico></ToolButton>
    <ToolButton aria-label="保存"><Ico><path d="M1 1h14v14H2l-1-1z" fill="#5f6878" /><path d="M4 1h8v6H4zM4 10h8v5H4z" fill="#fff" /></Ico></ToolButton>
    <ToolButton aria-label="同步"><Ico off><path d="M1 5l5-3 5 3v6l-5 3-5-3zM1 5l5 3 5-3M6 8v6" fill="#ddd" /><path d="M5 3l4-2 5 3v5" /><circle cx="11" cy="11" r="3.500" fill="#bbb" /></Ico></ToolButton>
    <ToolButton $w={10} aria-label="同步选项"><Down s={5} /></ToolButton>
    <ToolButton $w={28} aria-label="放弃"><Ico><path d="M1 7l6-5v3c6 0 8 3 7 9-1-4-3-5-7-5v3z" fill="#fff" /></Ico></ToolButton>
    <ToolButton $w={8} aria-label="放弃列表"><Down s={5} /></ToolButton>
    <ToolButton $w={28} aria-label="重做"><Ico off><path d="M15 7L9 2v3C3 5 1 8 2 14c1-4 3-5 7-5v3z" fill="#ddd" /></Ico></ToolButton>
    <ToolButton $w={8} aria-label="重做列表"><Down s={5} /></ToolButton>
    <ToolButton $w={28} aria-label="打印"><Ico><path d="M4 1h8v6H4z" fill="#fff" /><path d="M1 7h14v5H1z" fill="#b9bec8" /><path d="M3 11h10v4H3z" fill="#fff" /></Ico></ToolButton>
    <Divider />
    <ToolButton $w={22} aria-label="测量"><Ico off><path d="M1 4h14M3 2L1 4l2 2M13 2l2 2-2 2M1 9h14v4H1zM4 9v2M7 9v2M10 9v2M13 9v2" /></Ico></ToolButton>
    <ToolButton $w={10} aria-label="测量选项"><Down s={5} /></ToolButton>
    <ToolButton $w={26} aria-label="对齐标注"><Ico><path d="M3 13L13 3M9 3h4v4M3 9v4h4M1 11l4 4M11 1l4 4" strokeWidth="1.300" /></Ico></ToolButton>
    <ToolButton aria-label="按类别标记"><Ico><circle cx="10" cy="6" r="5" fill="#fff" /><path d="M9 5l1.500-1.500V9M1 14l1-5h4" /></Ico></ToolButton>
    <ToolButton $w={22} aria-label="文字"><Ico><path d="M6.500 2h3L15 15h-3l-1-3H5.500l-1 3H1.500zM8 5l-1.700 5h3.500z" fill="#333" fillRule="evenodd" stroke="none" /></Ico></ToolButton>
    <Divider />
    <ToolButton aria-label="三维视图"><House s={17} /></ToolButton>
    <ToolButton $w={10} aria-label="视图选项"><Down s={5} /></ToolButton>
    <ToolButton $w={28} aria-label="剖面"><Ico off><path d="M4 1v14l10-7zM0 8h4" fill="#aaa" /><circle cx="7" cy="8" r="4" fill="#ddd" /></Ico></ToolButton>
    <ToolButton $on aria-label="细线"><Ico><path d="M1 3h6M9 3h6M1 8h6M9 8h6M1 13h5M9 13h6" strokeWidth="1" /><path d="M1 3h6M1 8h5M1 13h5" strokeWidth="3" /><path d="M11 1L6 15" stroke={B} /></Ico></ToolButton>
    <Divider />
    <ToolButton aria-label="关闭隐藏窗口"><Ico off><path d="M2 2h5v5H2zM9 2h5v5H9zM2 9h5v5H2z" /><path d="M9 9l5 5M14 9l-5 5" strokeWidth="2" /></Ico></ToolButton>
    <ToolButton aria-label="切换窗口"><Ico><path d="M1 3h10v6H1zM5 8h9v7H5z" fill="#fff" /><path d="M12 2h3v4M2 11v3h2" /></Ico></ToolButton>
    <ToolButton $w={8} aria-label="窗口列表"><Down s={5} /></ToolButton>
    <ToolButton $w={22} aria-label="自定义"><svg width="8" height="8" viewBox="0 0 8 8"><path d="M0 0h8v1.500H0zM0 4h8L4 8z" fill="#333" /></svg></ToolButton>
  </Tools>
);

const statusIcons: [string, React.ReactNode][] = [
  ["选择链接", <g><path d="M1 4h6v3H1zM8 4h6v3H8z" stroke="#c79618" strokeWidth="2" /><Arrow /></g>],
  ["选择基线图元", <g><path d="M1 9l8-7v7zM1 12h8" stroke="#2470b3" fill="#d9ecfa" /><RedX x={9} y={1} /><g transform="translate(2)"><Arrow /></g></g>],
  ["选择锁定图元", <g><path d="M2 2h8v3H9v3h2v2H1V8h2V5H2zM6 10v5" stroke="#c2571c" fill="#f5b98c" /><g transform="translate(3)"><Arrow /></g></g>],
  ["按面选择", <g><path d="M1 4l6-2v10l-6 2z" stroke="#1c6db5" fill="#8ecbf5" /><RedX x={9} y={1} /><g transform="translate(2)"><Arrow /></g></g>],
  ["选择时拖拽", <g><path d="M5 0v9M0 5h9" stroke="#111" strokeWidth="1.500" /><g transform="translate(3)"><Arrow /></g></g>],
  ["后台进程", <circle cx="8" cy="8" r="5" stroke="#9a9a9a" strokeWidth="3" strokeDasharray="3 1.500" />],
];

export default function App() {
  return (
    <Desktop>
      <Global />
      <svg width="0" height="0" style={{ position: "absolute" }} aria-hidden="true">
        <defs>
          <linearGradient id="metal" x1="0" y1="0" x2="1" y2="1"><stop offset="0" stopColor="#fff" /><stop offset="1" stopColor="#b4bac5" /></linearGradient>
          <linearGradient id="cubeA" x1="0" y1="0" x2="0" y2="1"><stop offset="0" stopColor="#f4f4f4" /><stop offset="1" stopColor="#d9d9d9" /></linearGradient>
          <filter id="soft" x="-50%" y="-50%" width="200%" height="200%"><feGaussianBlur stdDeviation="14" /></filter>
        </defs>
      </svg>
      <Explorer aria-hidden="true">
        <ExplorerTop>
          <svg width="86" height="12" viewBox="0 0 86 12"><path d="M-4 4h12v8H-4zM51 4h12v8H51z" fill="#f5cf63" /><path d="M18 5v7M88 5v7" stroke="#999" /><path d="M30 12V4h8l4 4v4" fill="#fff" stroke="#888" /><path d="M36 9l3-2v4" stroke="#c33" fill="none" /><path d="M72 10h8" stroke="#222" strokeWidth="2" /><path d="M85.500 5v7" stroke="#999" /></svg>
          <ExplorerTitle>2021年第5期1+XBIM初级第3题考题二-建筑及机电建模</ExplorerTitle>
          <svg width="121" height="12" viewBox="0 0 121 12" fill="none" stroke="#888"><path d="M0 10.500h10M45.500 12V7.500h7V12M47.500 7V5.500h7V12M91 5l10 10M101 5L91 15" /></svg>
        </ExplorerTop>
        <ExplorerBottom>
          <span>5 个项目</span><span>选中 1 个项目&nbsp; 21.3 MB</span><Grow />
          <svg width="40" height="22" viewBox="0 0 40 22"><path d="M.5 0v21.500h21V0" fill="#c4e4f6" stroke="#3b9cd0" /><path d="M4.500 3h4v4h-4zM4.500 8h4v4h-4zM4.500 13h4v4h-4z" fill="#fff" stroke="#888" /><path d="M10 5h9M10 10h9M10 15h9" stroke="#777" strokeDasharray="4 1" /><path d="M26.500 4.500h13v10h-13z" fill="#fff" stroke="#999" /><path d="M28 6h10v4H28z" fill="#5ea5dd" /><path d="M28 10l4-1 6 2v2H28z" fill="#3d5f63" /></svg>
        </ExplorerBottom>
      </Explorer>
      <SearchEdge />
      <HelpBadge>?</HelpBadge>
      <Widget />

      <AppWindow>
        <TitleBar>
          <Qat />
          <Title>Autodesk Revit 2020 - 2021年第5期1+XBIM初级第3题考题二-建筑及机电建模.rvt - 三维视图: {"{3D}"}</Title>
          <Tools>
            <ToolButton $w={10} aria-label="收拢"><svg width="4" height="8" viewBox="0 0 4 8"><path d="M4 0v8L0 4z" fill="#333" /></svg></ToolButton>
            <ToolButton $w={28} aria-label="搜索"><Ico><path d="M1 15V8l2-6h3v13zM15 15V8l-2-6h-3v13zM6 5h4v4H6zM1 10h5M10 10h5" fill="url(#metal)" /></Ico></ToolButton>
            <ToolButton aria-label="用户"><Ico><path d="M8 1c5 0 4 8 1.500 9v1c2 1 5 1 5.500 4H1c.5-3 3.500-3 5.500-4v-1C4 9 3 1 8 1z" fill="url(#metal)" /></Ico></ToolButton>
            <Login>登录</Login>
            <ToolButton $w={8} aria-label="登录选项"><Down s={5} /></ToolButton>
            <ToolButton $w={28} aria-label="应用商店"><Ico><path d="M0 1h3l3 9h7M4 4h11l-3 5H6M6 10l-1 2h8" stroke="#25416b" fill="#fff" /><circle cx="6" cy="14" r="1" /><circle cx="12" cy="14" r="1" /></Ico></ToolButton>
            <Divider />
            <ToolButton $w={28} aria-label="帮助"><Ico><circle cx="8" cy="8" r="7.300" fill="#fff" /><path d="M5.500 6c0-3 5-3 5 0 0 2-2.500 2-2.500 4M8 11.500v2" stroke="#1f50a8" strokeWidth="2" /></Ico></ToolButton>
            <ToolButton $w={8} aria-label="帮助选项"><Down s={5} /></ToolButton>
            <WindowTools>
              <ToolButton aria-label="最小化"><svg width="8" height="12" viewBox="0 0 8 12"><path d="M0 9h8v2H0z" fill="#222" /></svg></ToolButton>
              <ToolButton $w={28} aria-label="最大化"><svg width="12" height="11" viewBox="0 0 12 11"><path d="M.5 1h11v9.500H.5z" fill="none" stroke="#222" strokeWidth="1.500" /></svg></ToolButton>
              <ToolButton aria-label="关闭"><Cross s={12} w={2} /></ToolButton>
            </WindowTools>
          </Tools>
        </TitleBar>
        <TabRow>
          <Tab $kind="file">文件</Tab><Tab $kind="on">建筑</Tab>
          {tabs.map(t => <Tab key={t}>{t}</Tab>)}
          <ToolButton $w={66} aria-label="最小化功能区"><svg width="25" height="10" viewBox="0 0 25 10"><rect x=".5" y=".5" width="14" height="9" rx="2.500" fill="#eee" stroke="#555" /><path d="M5 6h5L7.500 3.500zM19 4h5l-2.500 3z" fill="#222" /></svg></ToolButton>
        </TabRow>
        <Ribbon>
          <Panel>
            <PanelRow><BigButton $w={38} $on><Ico s={30} vb={32}>{R.cursor}</Ico><Label>修改</Label></BigButton></PanelRow>
            <PanelName>选择 <Down s={8} /></PanelName>
          </Panel>
          {panels.map(p => (
            <Panel key={p.name}>
              <PanelRow>{p.b.map(b => <RibbonButton key={b.i} b={b} />)}</PanelRow>
              <PanelName>{p.name}{p.dd && <Down s={8} />}</PanelName>
            </Panel>
          ))}
        </Ribbon>
        <Options />
        <Work>
          <Side>
            <Palette>
              <PaletteHead><HeadText>属性</HeadText><IconButton aria-label="关闭属性"><Cross w={1.5} /></IconButton></PaletteHead>
              <TypeBox><Thumb><House s={32} /></Thumb><Grow>三维视图</Grow><Down s={8} /></TypeBox>
              <TypeRow>
                <SelectBox $w={133}><select aria-label="视图类型"><option>三维视图: {"{3D}"}</option></select><Chevron w={1} /></SelectBox>
                <TextButton><Ico><path d="M1 1h6v6H1zM9 1h6v6H9zM1 9h6v6H1z" fill="url(#metal)" /><path d="M9 7h6v8H9z" fill="#fff" stroke="#1c6db5" /><path d="M11 9h2M11 12h2" stroke="#1c6db5" /></Ico>编辑类型</TextButton>
              </TypeRow>
              <PropBody>
                <PropTable>
                  <colgroup><col style={{ width: 94 }} /><col style={{ width: 93 }} /><col /></colgroup>
                  <tbody>
                    <tr className="group"><th colSpan={3} scope="colgroup"><GroupHead>图形<Fold /></GroupHead></th></tr>
                    {props.map(([n, v, x, dim]) => <tr key={n} className={dim ? "dim" : undefined}><th scope="row">{n}</th><td>{v}</td><td>{x}</td></tr>)}
                    <tr className="group"><th colSpan={3} scope="colgroup"><GroupHead>范围<Fold /></GroupHead></th></tr>
                  </tbody>
                </PropTable>
                <ScrollV><IconButton aria-label="向上"><Chevron r={180} /></IconButton><Knob $w={15} $h={76} /><Grow /><IconButton aria-label="向下"><Chevron /></IconButton></ScrollV>
              </PropBody>
              <Foot><HelpLink href="#help">属性帮助</HelpLink><Apply disabled>应用</Apply></Foot>
            </Palette>
            <Palette $grow>
              <PaletteHead><HeadText>项目浏览器 - 2021年第5期1+XBI...</HeadText><IconButton aria-label="关闭项目浏览器"><Cross w={1.5} /></IconButton></PaletteHead>
              <TreeWrap>
                <Tree>
                  <TreeRow><Guide $line="none" $w={20}><Box k="-" /><Dots $w={5} /></Guide>
                    <Ico><path d="M1 4V1h3M12 1h3v3M15 12v3h-3M4 15H1v-3" /><path d="M4 7l3-3h5v5l-3 3H4z" fill="#eee" /></Ico><RootName>视图 (规程)</RootName></TreeRow>
                  {rows.map((r, i) => (
                    <TreeRow key={i}>
                      {r.g.split("").map((c, j) => <Guide key={j} $line={c === "f" ? "full" : "none"} />)}
                      {r.k ? <Guide $line={r.last ? "half" : "full"} $w={26}><Box k={r.k} /><Dots $w={10} /></Guide>
                        : <Guide $line={r.last ? "half" : "full"} $w={26}><Dots $w={17} $leaf /></Guide>}
                      {r.t}
                    </TreeRow>
                  ))}
                </Tree>
                <ScrollV><IconButton aria-label="向上"><Chevron r={180} /></IconButton><Knob $w={15} $h={40} /><Grow /><IconButton aria-label="向下"><Chevron /></IconButton></ScrollV>
              </TreeWrap>
              <ScrollRow><ScrollH><IconButton aria-label="向左"><Chevron r={90} /></IconButton><Knob $w={146} $h={15} /><Grow /><IconButton aria-label="向右"><Chevron r={-90} /></IconButton></ScrollH></ScrollRow>
            </Palette>
          </Side>
          <View>
            <ViewTabs>
              <ViewTab><House off />视图 1</ViewTab>
              <ViewTab $on><House />{"{3D}"}<Grow /><Cross w={1.5} /></ViewTab>
              <Grow /><ToolButton $w={20} aria-label="视图列表"><svg width="8" height="8" viewBox="0 0 8 8"><path d="M0 0h8v1.500H0zM0 4h8L4 8z" fill="#333" /></svg></ToolButton>
            </ViewTabs>
            <Stage>
              <Drawing viewBox="225 211 1655 761" preserveAspectRatio="xMidYMid meet" role="img" aria-label="三维视图"><Model /><Cube /></Drawing>
              <ScrollV><IconButton aria-label="向上"><Chevron r={180} /></IconButton><Grow /><Knob $w={16} $h={17} /><Grow /><IconButton aria-label="向下"><Chevron /></IconButton></ScrollV>
            </Stage>
            <ViewBar>
              <ScaleText>1 : 200</ScaleText>
              {viewIcons.map(([n, g]) => <ViewIcon key={n} aria-label={n}><Ico>{g}</Ico></ViewIcon>)}
              <ScrollH><IconButton aria-label="向左"><Chevron r={90} /></IconButton><Grow /><Knob $w={17} $h={16} /><Grow /><IconButton aria-label="向右"><Chevron r={-90} /></IconButton></ScrollH>
              <svg width="20" height="16" viewBox="0 0 20 16"><path d="M12 4h2v2h-2zM12 8h2v2h-2zM12 12h2v2h-2zM8 8h2v2H8zM8 12h2v2H8zM4 12h2v2H4z" fill="#bbb" /></svg>
            </ViewBar>
          </View>
        </Work>
        <Status>
          <StatusHint>单击可进行选择; 按 Tab 键并单击可选择其他项目; 按 Ctrl 键并单击可将新项目添加到选择集; 按 Shift 键并单击可取消选择。</StatusHint>
          <StatusGroup>
            <Ico><path d="M1 6l3-2 3 2v8H1z" fill="#8ecbf5" stroke="#1c6db5" /><path d="M5 2l4-1 2 2v4H7" fill="#7cc35c" stroke="#2a6a1a" /><path d="M13 5v9M11 5v3l2 1 2-1V5" stroke="#2a5b93" /></Ico>
            <SelectBox $w={204} $dim><select aria-label="工作集"><option></option></select><Chevron w={1} c="#999" /></SelectBox>
            <Ico off><path d="M4 2h10v4H9l-3 4" fill="#ddd" /><path d="M1 15l3-6 4 6z" fill="#999" /></Ico><span>:0</span>
          </StatusGroup>
          <Gap $w={20} />
          <StatusGroup $gap={10}>
            <Ico><path d="M1 1h14v14H1z" fill="#fff" /><path d="M1 4h14M4 7h2M4 10h1M8 7h5M7 10h6M8 13h5" /></Ico>
            <Ico off><path d="M1 1h13v14H1z" fill="#999" /><path d="M1 11h8M6 8l3 3-3 3" stroke="#fff" /></Ico>
            <SelectBox $w={204} $dim><select aria-label="设计选项"><option>主模型</option></select><Chevron w={1} c="#999" /></SelectBox>
          </StatusGroup>
          <Grow />
          <StatusGroup $gap={11}>
            {statusIcons.map(([n, g]) => <IconButton key={n} aria-label={n}><Ico>{g}</Ico></IconButton>)}
            <StatusGroup $gap={1}><Ico><path d="M0 1h16l-6 7v7l-4-2V8z" fill="#8d939d" stroke="#555" /></Ico>:0</StatusGroup>
          </StatusGroup>
          <Gap $w={60} /><Divider /><Divider />
        </Status>
      </AppWindow>

      <Taskbar>
        <Task aria-label="开始"><svg width="16" height="16" viewBox="0 0 16 16"><path d="M0 2l7-1v6.500H0zM8 1l8-1v7.500H8zM0 8.500h7V15l-7-1zM8 8.500h8V16l-8-1z" fill="#fff" /></svg></Task>
        <Task><Pr>Pr</Pr></Task>
        <Task $run aria-label="WPS"><svg width="22" height="18" viewBox="0 0 22 18" fill="none" stroke="#e8352b" strokeWidth="3"><path d="M1 2h5l2 13 6-13 1 13 6-13h-8" /></svg></Task>
        <Task $run aria-label="浏览器"><svg width="22" height="22" viewBox="0 0 22 22"><circle cx="11" cy="11" r="10" fill="#56bd3b" /><path d="M6 11h10c0-7-10-7-10 0 0 6 7 6 9 3" stroke="#fff" strokeWidth="2.500" fill="none" /><path d="M2 17C6 12 15 4 21 4" stroke="#d9f2cf" strokeWidth="1.500" fill="none" /></svg></Task>
        <Task $run aria-label="文件资源管理器"><svg width="22" height="20" viewBox="0 0 22 20"><path d="M1 2h7l2 2h11v14H1z" fill="#f5b93c" /><path d="M1 6h20v12H1z" fill="#ffd768" /><path d="M5 18v-7h12v7h-3v-4H8v4z" fill="#3c97d3" /></svg></Task>
        <Task $on aria-label="Revit"><svg width="24" height="24" viewBox="-3 -3 24 24"><path d="M-3-3h24v24H-3z" fill="#e4edf7" /><path d="M2 2l4-1v15l-3 1z" fill="#17508e" /><path d="M4 1h7c5 0 5 7 1 8l4 8h-4L8 10v6H5z" fill="#2a6cb0" /><path d="M8 4v3h2c2 0 2-3 0-3z" fill="#dfeaf5" /></svg></Task>
        <Grow />
        <Tray $w={20} aria-label="USB"><svg width="10" height="16" viewBox="0 0 10 16"><path d="M2 0h6v4H2z" fill="#ddd" /><path d="M1 4h8v12H1z" fill="#48b524" /><path d="M5 6v8M3 8v2l2 2 2-2V8" stroke="#fff" fill="none" /></svg></Tray>
        <Two $w={88}><span>4%</span><span>CPU利用率</span></Two>
        <Gap $w={88} />
        <Weather><svg width="23" height="23" viewBox="0 0 23 23"><circle cx="11" cy="12.500" r="10" fill="#f39a14" /><circle cx="17" cy="6" r="6" fill="#c42b1c" /><text x="17" y="9.500" textAnchor="middle" fontSize="10" fontWeight="700" fill="#fff" fontFamily="Noto Sans, sans-serif">2</text></svg><span>5°C  晴朗</span></Weather>
        <Tray $w={20} aria-label="显示隐藏的图标"><svg width="14" height="8" viewBox="0 0 14 8"><path d="M1 7l6-6 6 6" stroke="#fff" strokeWidth="1.300" fill="none" /></svg></Tray>
        <Two $w={84}><span>14:00</span><span>2024-12-29</span></Two>
        <Tray $w={36} aria-label="通知"><svg width="17" height="17" viewBox="0 0 17 17"><path d="M1 1h15v12h-5l-2.500 3L6 13H1z" stroke="#fff" strokeWidth="1.200" fill="none" /></svg></Tray>
        <Gap $w={5} /><Edge />
      </Taskbar>
    </Desktop>
  );
}
